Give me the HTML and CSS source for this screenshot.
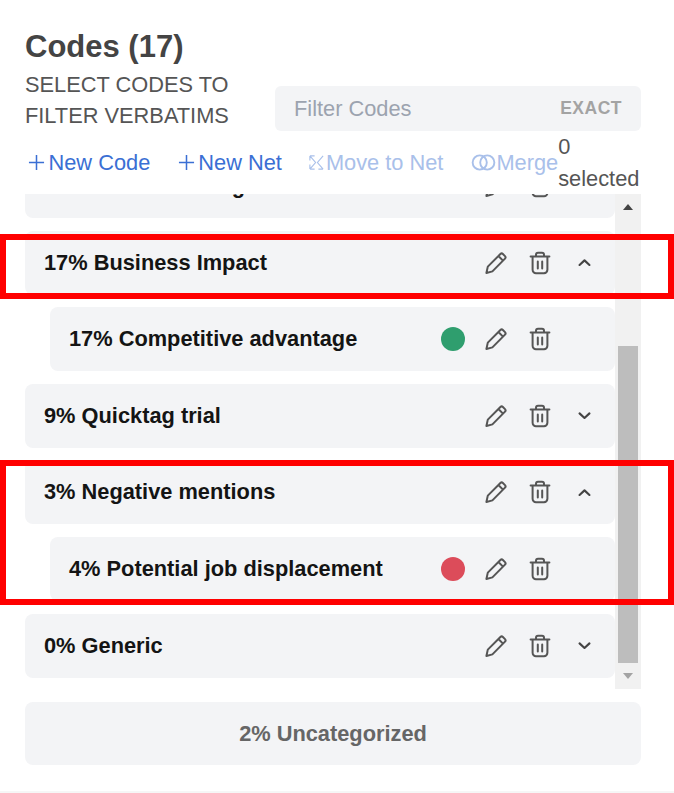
FILE: index.html
```html
<!DOCTYPE html>
<html lang="en">
<head>
  <meta charset="UTF-8">
  <title>Codes</title>
  <link rel="stylesheet" href="styles.css">
</head>

<body>
<svg class="icon-defs" width="0" height="0">
  <symbol id="pencil" viewBox="0 0 24 24">
    <path d="M2.400 22 3.800 15.600 16.400 3a1.800 1.800 0 0 1 2.500 0l2.100 2.100a1.800 1.800 0 0 1 0 2.500L8.400 20.400Z M14.400 5l4.600 4.600"/>
  </symbol>
  <symbol id="trash" viewBox="0 0 24 24">
    <path d="M2.600 5.600h18.800 M8 5.600V3.800A2 2 0 0 1 10 1.800h4a2 2 0 0 1 2 2v1.800 M4.600 5.600v13.200a3.400 3.400 0 0 0 3.400 3.400h8a3.400 3.400 0 0 0 3.400-3.400V5.600 M9.800 10.400v7 M14.200 10.400v7"/>
  </symbol>
  <symbol id="up" viewBox="0 0 24 24"><path d="M5 15.500 12 9l7 6.500"/></symbol>
  <symbol id="down" viewBox="0 0 24 24"><path d="M5 9l7 6.500L19 9"/></symbol>
</svg>

<div class="panel">
  <div class="header">
    <div class="heading">
      <h1 class="title">Codes (17)</h1>
      <p class="subtitle">SELECT CODES TO<br>FILTER VERBATIMS</p>
    </div>
    <div class="filter">
      <span class="filter-text">Filter Codes</span>
      <span class="filter-mode">EXACT</span>
    </div>
  </div>

  <div class="actions">
    <a class="action action-new"><svg class="action-icon" viewBox="0 0 18 18"><path d="M9 1v16M1 9h16"/></svg>New Code</a>
    <a class="action action-net"><svg class="action-icon" viewBox="0 0 18 18"><path d="M9 1v16M1 9h16"/></svg>New Net</a>
    <a class="action action-off action-move"><svg class="action-icon" viewBox="0 0 18 18"><path d="M2 2l6 7-6 7M2 2v5M2 2h5M2 16v-5M2 16h5M16 2 10 9l6 7M16 16h-5"/></svg>Move to Net</a>
    <a class="action action-off action-merge"><svg class="merge-icon" viewBox="0 0 26 18"><circle cx="9" cy="9" r="7.500"/><circle cx="17" cy="9" r="7.500"/></svg>Merge</a>
    <span class="selected">0 selected</span>
  </div>

  <div class="list-wrap">
    <div class="list">
      <div class="row">
        <span class="row-name">12% Better labeling</span>
        <svg class="icon"><use href="#pencil"/></svg>
        <svg class="icon"><use href="#trash"/></svg>
        <svg class="chevron"><use href="#down"/></svg>
      </div>
      <div class="row">
        <span class="row-name">17% Business Impact</span>
        <svg class="icon"><use href="#pencil"/></svg>
        <svg class="icon"><use href="#trash"/></svg>
        <svg class="chevron"><use href="#up"/></svg>
      </div>
      <div class="row row-child">
        <span class="row-name">17% Competitive advantage</span>
        <span class="dot dot-green"></span>
        <svg class="icon"><use href="#pencil"/></svg>
        <svg class="icon"><use href="#trash"/></svg>
      </div>
      <div class="row">
        <span class="row-name">9% Quicktag trial</span>
        <svg class="icon"><use href="#pencil"/></svg>
        <svg class="icon"><use href="#trash"/></svg>
        <svg class="chevron"><use href="#down"/></svg>
      </div>
      <div class="row">
        <span class="row-name">3% Negative mentions</span>
        <svg class="icon"><use href="#pencil"/></svg>
        <svg class="icon"><use href="#trash"/></svg>
        <svg class="chevron"><use href="#up"/></svg>
      </div>
      <div class="row row-child">
        <span class="row-name">4% Potential job displacement</span>
        <span class="dot dot-red"></span>
        <svg class="icon"><use href="#pencil"/></svg>
        <svg class="icon"><use href="#trash"/></svg>
      </div>
      <div class="row">
        <span class="row-name">0% Generic</span>
        <svg class="icon"><use href="#pencil"/></svg>
        <svg class="icon"><use href="#trash"/></svg>
        <svg class="chevron"><use href="#down"/></svg>
      </div>
    </div>
    <div class="scrollbar">
      <span class="arrow arrow-up"></span>
      <span class="thumb"></span>
      <span class="arrow arrow-down"></span>
    </div>
  </div>

  <div class="uncategorized">2% Uncategorized</div>
</div>

<div class="mark mark-one"></div>
<div class="mark mark-two"></div>
</body>
</html>
```

FILE: styles.css
```css
* {
  margin: 0;
  padding: 0;
  box-sizing: border-box;
}

html, body {
  height: 100%;
  overflow: hidden;
}

body {
  position: relative;
  background-color: white;
  font-family: "Liberation Sans", Arial, sans-serif;
  color: #4b4b4b;
}

.icon-defs {
  position: absolute;
}

.panel {
  height: 100%;
  padding: 30px 33px 0 25px;
  border-bottom: 2px solid #f6f6f6;
}

.header {
  display: flex;
  justify-content: space-between;
  align-items: flex-end;
}

.title {
  font-size: 31px;
  line-height: 34px;
  font-weight: bold;
  color: #444;
}

.subtitle {
  margin-top: 5px;
  font-size: 21.800px;
  line-height: 31px;
  color: #555;
}

.filter {
  display: flex;
  justify-content: space-between;
  align-items: center;
  width: 366px;
  height: 45px;
  padding: 0 19px;
  background-color: #f3f4f6;
  border-radius: 6px;
}

.filter-text {
  font-size: 21.800px;
  color: #9ca3af;
}

.filter-mode {
  font-size: 17.500px;
  font-weight: bold;
  letter-spacing: 0.500px;
  color: #a3a3a3;
}

.actions {
  display: flex;
  align-items: center;
  height: 63px;
  padding-left: 3px;
}

.action {
  flex: none;
  display: flex;
  align-items: center;
  gap: 3.500px;
  font-size: 21.800px;
  white-space: nowrap;
  color: #3b6fd4;
}

.action-net {
  margin-left: 27.500px;
}

.action-move {
  margin-left: 26px;
  gap: 1px;
}

.action-merge {
  margin-left: 28px;
  gap: 0;
}

.action-off {
  color: #a9c0ea;
}

.action-icon {
  width: 17px;
  height: 17px;
  fill: none;
  stroke: currentColor;
  stroke-width: 1.600;
}

.action-off .action-icon {
  stroke-width: 1.200;
}

.merge-icon {
  width: 25px;
  height: 17px;
  fill: none;
  stroke: currentColor;
  stroke-width: 2;
}

.selected {
  flex: none;
  width: 82px;
  font-size: 21.800px;
  line-height: 32px;
  color: #555;
}

.list-wrap {
  display: flex;
  height: 495px;
  overflow: hidden;
}

.list {
  flex: 1;
  display: flex;
  flex-direction: column;
  gap: 12.600px;
  margin-top: -40px;
}

.row {
  flex: none;
  display: flex;
  align-items: center;
  height: 64px;
  padding: 0 18px 0 19px;
  background-color: #f3f4f6;
  border-radius: 8px;
}

.row-child {
  margin-left: 25px;
  padding-right: 43px;
}

.row-name {
  flex: 1;
  font-size: 21.800px;
  font-weight: bold;
  color: #141414;
}

.dot {
  width: 24px;
  height: 24px;
  margin-right: 19px;
  border-radius: 50%;
}

.dot-green {
  background-color: #2f9e6e;
}

.dot-red {
  background-color: #dc4c5a;
}

.icon {
  width: 24px;
  height: 24px;
  margin-right: 20px;
  fill: none;
  stroke: #555;
  stroke-width: 2;
  stroke-linecap: round;
  stroke-linejoin: round;
}

.chevron {
  width: 17px;
  height: 17px;
  margin-left: 3.500px;
  margin-right: 4.500px;
  fill: none;
  stroke: #444;
  stroke-width: 3;
  stroke-linecap: round;
  stroke-linejoin: round;
}

.scrollbar {
  position: relative;
  width: 26px;
  background-color: #f1f1f1;
}

.thumb {
  position: absolute;
  top: 152px;
  left: 3px;
  width: 20px;
  height: 317px;
  background-color: #bdbdbd;
}

.arrow {
  position: absolute;
  left: 8px;
  border-left: 5px solid transparent;
  border-right: 5px solid transparent;
}

.arrow-up {
  top: 10px;
  border-bottom: 6px solid #444;
}

.arrow-down {
  bottom: 10px;
  border-top: 6px solid #a3a3a3;
}

.uncategorized {
  display: flex;
  justify-content: center;
  align-items: center;
  height: 63px;
  margin-top: 13px;
  font-size: 21.800px;
  font-weight: bold;
  color: #666;
  background-color: #f3f4f6;
  border-radius: 8px;
}

/* red highlight boxes drawn over the list */
.mark {
  position: absolute;
  left: 0;
  width: 674px;
  border: 6px solid #ff0000;
}

.mark-one {
  top: 234px;
  height: 65px;
}

.mark-two {
  top: 460px;
  height: 145px;
}
```
